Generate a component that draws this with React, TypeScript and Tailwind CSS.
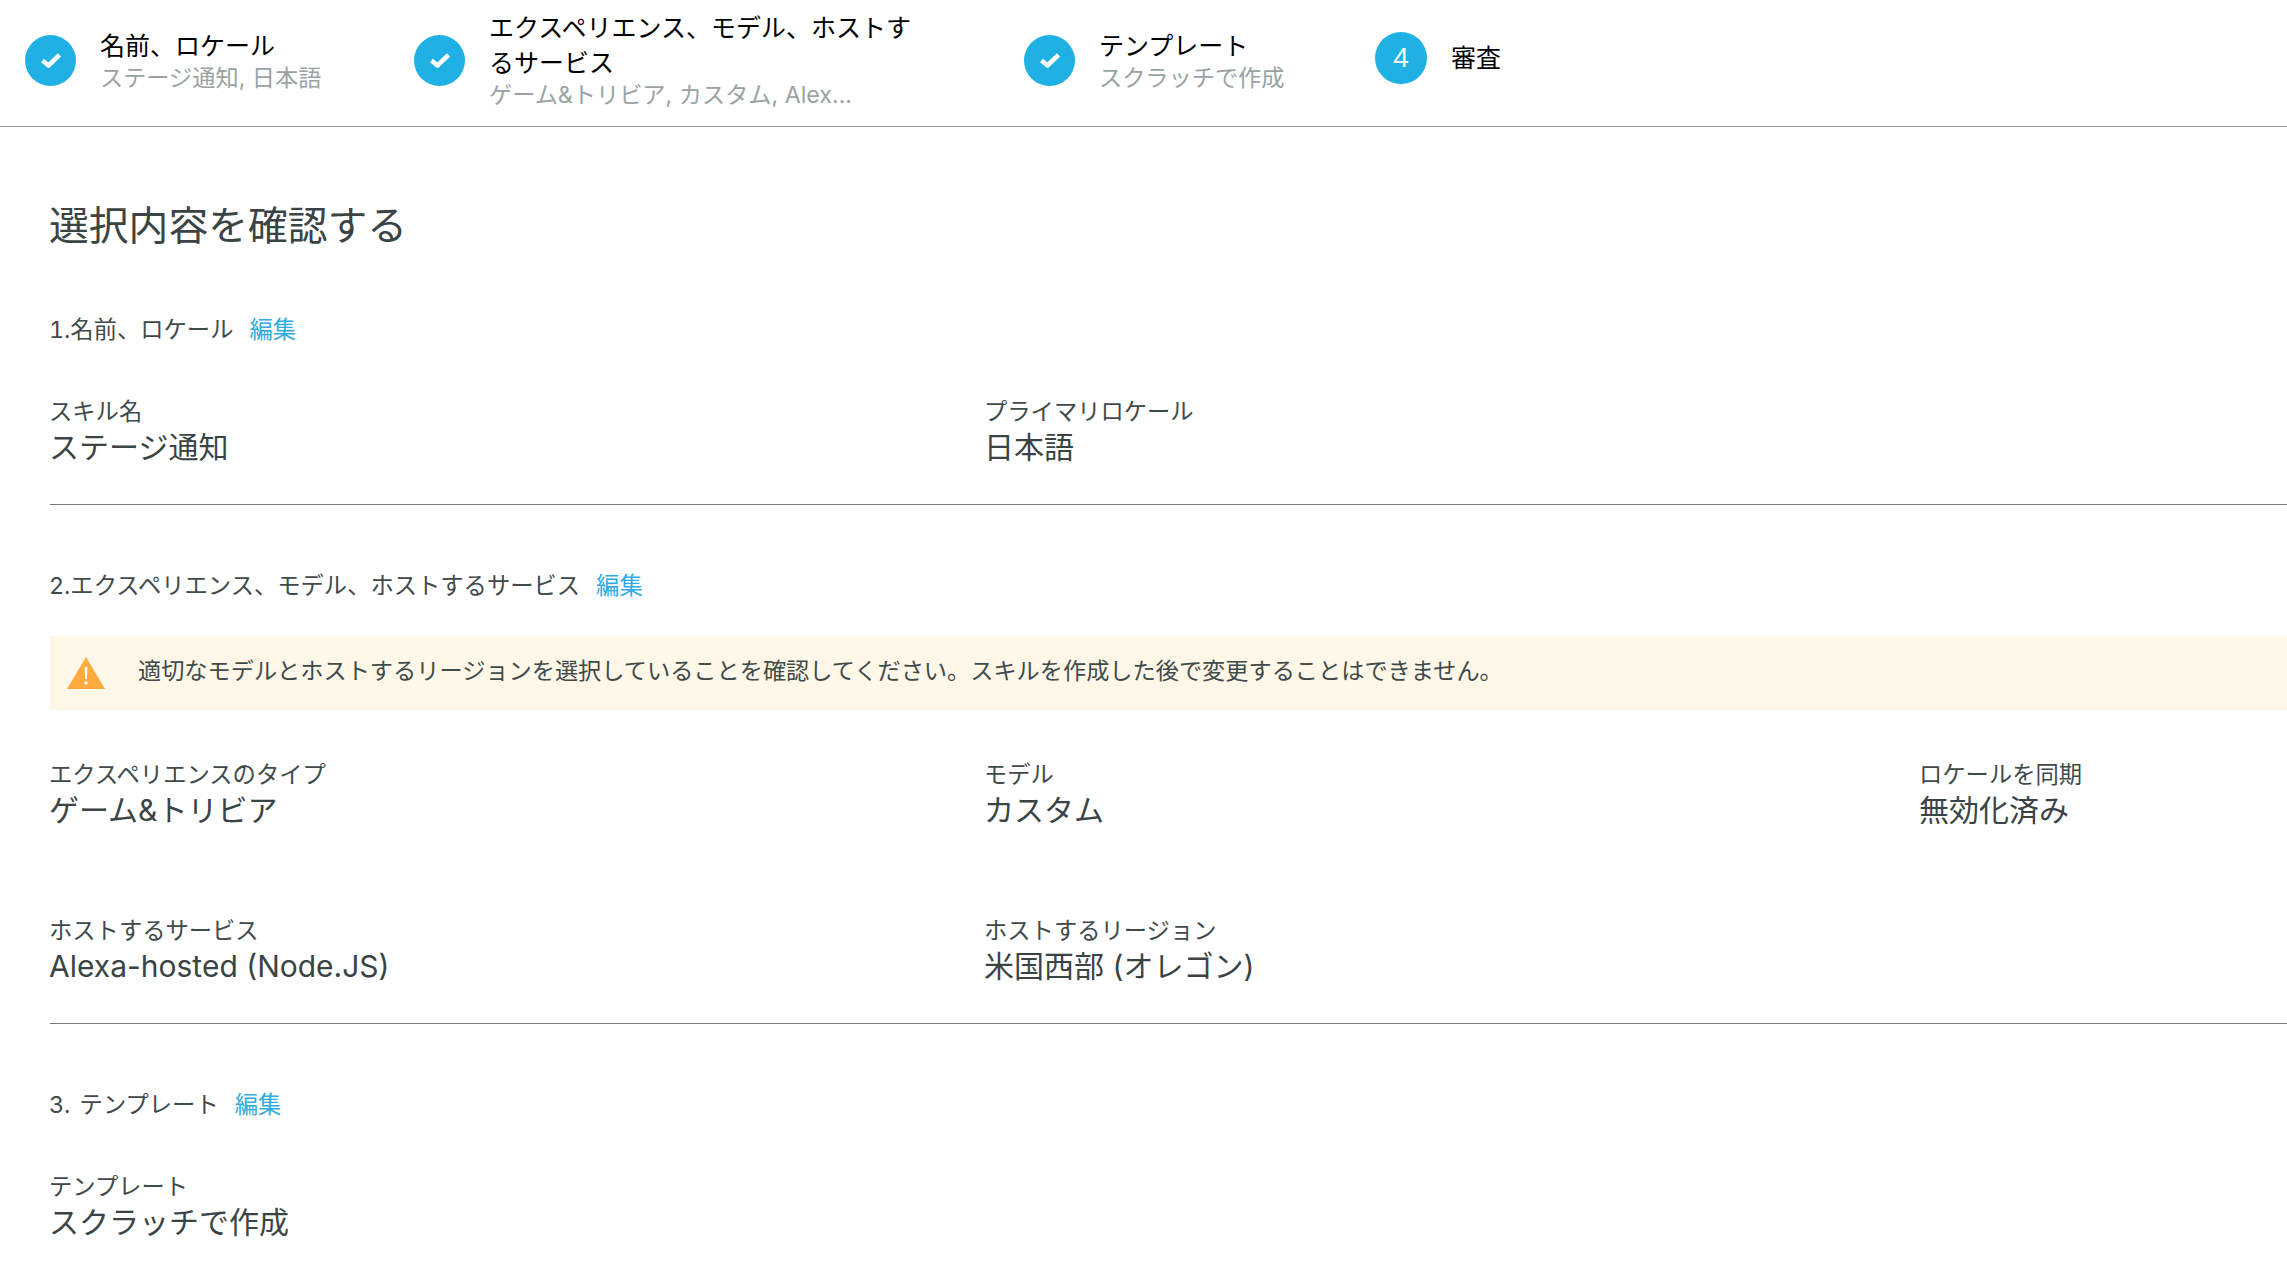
const FONT = "font-['Inter','Noto_Sans_CJK_JP',sans-serif]";

function Circle() {
  return (
    <div className="w-[51px] h-[51px] rounded-full bg-[#1fb0e4] flex items-center justify-center shrink-0">
      <svg width="20" height="15" viewBox="0 0 20 15" aria-hidden="true">
        <path d="M1.5 7.5 L7.5 12.5 L18.5 2" fill="none" stroke="#fff" strokeWidth="4.5" />
      </svg>
    </div>
  );
}

function Step({ title, sub, className }: { title: string; sub: string; className: string }) {
  return (
    <div className={`flex items-center shrink-0 ${className}`}>
      <Circle />
      <div className="ml-[24px] w-[430px]">
        <div className="text-[25px] leading-[35px] text-black">{title}</div>
        <div className="text-[23.2px] leading-[29px] text-[#99a3a4]">{sub}</div>
      </div>
    </div>
  );
}

function Field({ label, value }: { label: string; value: string }) {
  return (
    <div>
      <div className="text-[23.3px] leading-[31px] text-[#3f4a4b]">{label}</div>
      <div className="text-[30px] leading-[40px] text-[#3a4445]">{value}</div>
    </div>
  );
}

function SectionTitle({ text }: { text: string }) {
  return (
    <div className="-ml-px text-[23.3px] leading-[33px] text-[#3f4a4b] tabular-nums [word-spacing:3px]">
      {text}
      <a className="ml-[16px] text-[#2fabe2]">編集</a>
    </div>
  );
}

export default function App() {
  return (
    <div className={`${FONT} w-full h-[1282px] overflow-hidden bg-white`}>
      <header className="h-[127px] border-b border-[#999999] flex items-center pb-[5px] pl-[25px]">
        <Step title="名前、ロケール" sub="ステージ通知, 日本語" className="w-[389px]" />
        <Step title="エクスペリエンス、モデル、ホストするサービス" sub="ゲーム&トリビア, カスタム, Alex..." className="w-[610px]" />
        <Step title="テンプレート" sub="スクラッチで作成" className="w-[351px]" />
        <div className="flex items-center mb-[5px]">
          <div className="w-[52px] h-[52px] rounded-full bg-[#1fb0e4] flex items-center justify-center text-white text-[28px] font-['Liberation_Sans',sans-serif]">4</div>
          <div className="ml-[24px] text-[25px] leading-[34px] text-black">審査</div>
        </div>
      </header>
      <main className="pl-[50px]">
        <h1 className="-ml-px pt-[72px] text-[39.8px] leading-[54px] font-normal text-[#3a4445]">選択内容を確認する</h1>
        <div className="mt-[60px]"><SectionTitle text="1.名前、ロケール" /></div>
        <div className="-ml-px mt-[50px] grid grid-cols-[935px_935px_1fr]">
          <Field label="スキル名" value="ステージ通知" />
          <Field label="プライマリロケール" value="日本語" />
        </div>
        <hr className="mt-[37px] border-0 border-t border-[#77777c]" />
        <div className="mt-[64px]"><SectionTitle text="2.エクスペリエンス、モデル、ホストするサービス" /></div>
        <div className="mt-[34px] h-[74px] bg-[#fff7e8] flex items-center pl-[17px]">
          <svg width="38" height="32" viewBox="0 0 38 32" aria-hidden="true" className="shrink-0">
            <path d="M19 0 L38 32 H0 Z" fill="#ffab3d" />
            <path d="M17.6 10 H20.4 L19.8 22 H18.2 Z" fill="#fff" />
            <circle cx="19" cy="26" r="1.8" fill="#fff" />
          </svg>
          <span className="ml-[33px] -mt-[3px] text-[23.2px] text-[#3f4a4b] whitespace-nowrap">適切なモデルとホストするリージョンを選択していることを確認してください。スキルを作成した後で変更することはできません。</span>
        </div>
        <div className="-ml-px mt-[49px] grid grid-cols-[935px_935px_1fr] gap-y-[85px]">
          <Field label="エクスペリエンスのタイプ" value="ゲーム&トリビア" />
          <Field label="モデル" value="カスタム" />
          <Field label="ロケールを同期" value="無効化済み" />
          <Field label="ホストするサービス" value="Alexa-hosted (Node.JS)" />
          <Field label="ホストするリージョン" value="米国西部 (オレゴン)" />
        </div>
        <hr className="mt-[37px] border-0 border-t border-[#77777c]" />
        <div className="mt-[64px]"><SectionTitle text="3. テンプレート" /></div>
        <div className="-ml-px mt-[50px]">
          <Field label="テンプレート" value="スクラッチで作成" />
        </div>
      </main>
    </div>
  );
}
